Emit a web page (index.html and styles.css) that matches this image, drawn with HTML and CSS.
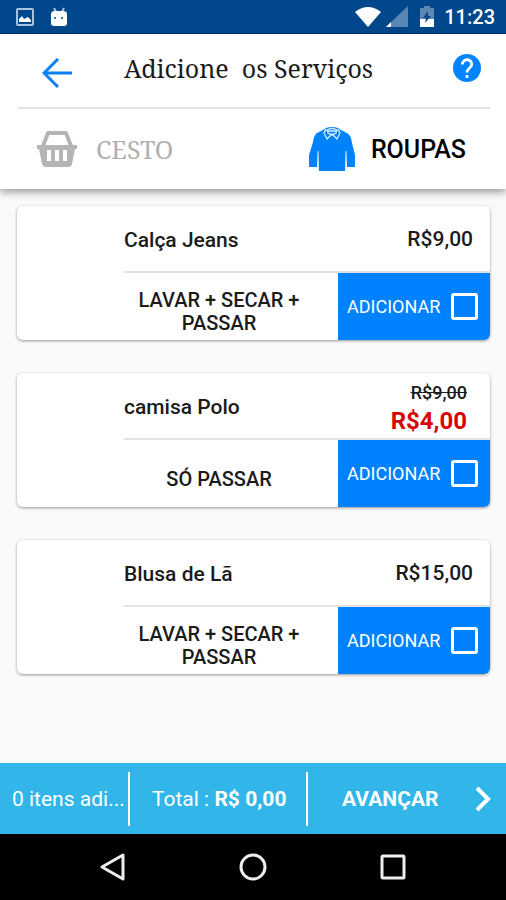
FILE: index.html
```html
<!DOCTYPE html>
<html lang="pt-BR">
<head>
<meta charset="utf-8">
<meta name="viewport" content="width=device-width, initial-scale=1">
<title>Adicione os Serviços</title>
<link rel="stylesheet" href="styles.css">
</head>
<body>
<div class="status">
  <svg class="status-picture" viewBox="0 0 18 18" width="18" height="18" aria-hidden="true"><rect x="1" y="1" width="16" height="16" rx="1" fill="none" stroke="#a9c2de" stroke-width="2"/><path d="M3 14V11L6 8L8 11L12 9L15 12V14Z" fill="#fff"/></svg>
  <svg class="status-robot" viewBox="0 0 18 20" width="18" height="20" aria-hidden="true"><path d="M4 1L6 5M14 1L12 5" stroke="#a9c2de" stroke-width="2"/><path d="M1 7Q1 4 5 4H13Q17 4 17 7V16Q17 19 14 19H4Q1 19 1 16Z" fill="#fff"/><circle cx="5" cy="11" r="1" fill="#00478b"/><circle cx="12" cy="11" r="1" fill="#00478b"/></svg>
  <svg class="status-wifi" viewBox="0 0 26 20" width="26" height="20" aria-hidden="true"><path d="M0 5Q13 -5 26 5L13 20Z" fill="#fff"/></svg>
  <svg class="status-signal" viewBox="0 0 22 21" width="22" height="21" aria-hidden="true"><path d="M0 21L22 0V21Z" fill="#5c87b4"/><path d="M0 21L5 16V21Z" fill="#fff"/></svg>
  <svg class="status-battery" viewBox="0 0 14 21" width="14" height="21" aria-hidden="true"><path d="M4 0H10V2H14V13H0V2H4Z" fill="#5c87b4"/><path d="M0 13H14V21H0Z" fill="#fff"/><path d="M8 5L3 12H6L5 17L11 10H8Z" fill="#00478b"/></svg>
  <time class="clock">11:23</time>
</div>
<header class="header">
  <div class="titlebar">
    <button class="icon-button back" aria-label="Voltar"><svg viewBox="0 0 30 30" width="30" height="30"><path d="M30 15H3M16 1L2 15L16 29" fill="none" stroke="#0b80f4" stroke-width="3"/></svg></button>
    <h1 class="title">Adicione&nbsp; os Serviços</h1>
    <button class="icon-button help" aria-label="Ajuda"><svg viewBox="0 0 28 28" width="28" height="28"><circle cx="14" cy="14" r="14" fill="#0084ff"/><path d="M9.300 10.500C9.300 4.200 18.700 4.200 18.700 10.300C18.700 14 14 14 14 18.500" fill="none" stroke="#fff" stroke-width="2.800"/><path d="M12.600 21H15.400V24H12.600Z" fill="#fff"/></svg></button>
  </div>
  <nav class="tabs">
    <a class="tab tab-basket" href="#cesto">
      <svg viewBox="0 0 42 36" width="42" height="36" aria-hidden="true"><path d="M7 15L12 2H30L35 15" fill="none" stroke="#b5b5b5" stroke-width="4" stroke-linejoin="round"/><path fill-rule="evenodd" d="M1 14H41V18H39L36 33Q35 36 33 36H9Q7 36 6 33L3 18H1ZM11 19V30H15V19ZM19 19V30H23V19ZM27 19V30H31V19Z" fill="#b5b5b5"/></svg>
      <span>CESTO</span>
    </a>
    <a class="tab tab-clothes" href="#roupas" aria-current="page">
      <svg viewBox="0 0 46 46" width="46" height="46" aria-hidden="true"><path d="M14 4L17 2Q23 0 29 2L32 4L38 7Q42 9 43 17L46 29V41H38L37 25L36 45H10L9 25L8 41H0V29L4 16Q5 9 8 7Z" fill="#0082fc"/><path d="M9 40V25M37 40V25" stroke="#d5edff" stroke-width="1"/><path d="M17 3L15 7L18 13L23 8L28 13L31 7L29 3M18 4Q23 1 28 4L27 7L23 9L19 7ZM19 5H27" fill="none" stroke="#d5edff" stroke-width="1.300"/></svg>
      <span>ROUPAS</span>
    </a>
  </nav>
</header>
<main class="list">
  <article class="card">
    <div class="summary"><h2 class="name">Calça Jeans</h2><p class="price">R$9,00</p></div>
    <div class="service"><p class="kind">LAVAR + SECAR + PASSAR</p><label class="add" for="jeans">ADICIONAR<input class="box" type="checkbox" id="jeans"></label></div>
  </article>
  <article class="card">
    <div class="summary"><h2 class="name">camisa Polo</h2><p class="price offer"><s class="old">R$9,00</s><strong class="new">R$4,00</strong></p></div>
    <div class="service"><p class="kind">SÓ PASSAR</p><label class="add" for="polo">ADICIONAR<input class="box" type="checkbox" id="polo"></label></div>
  </article>
  <article class="card">
    <div class="summary"><h2 class="name">Blusa de Lã</h2><p class="price">R$15,00</p></div>
    <div class="service"><p class="kind">LAVAR + SECAR + PASSAR</p><label class="add" for="blusa">ADICIONAR<input class="box" type="checkbox" id="blusa"></label></div>
  </article>
</main>
<footer class="checkout">
  <p class="count">0 itens adi...</p>
  <p class="total">Total : <strong>R$ 0,00</strong></p>
  <button class="next"><span>AVANÇAR</span><svg viewBox="0 0 16 26" width="16" height="26" aria-hidden="true"><path d="M2 2L13 13L2 24" fill="none" stroke="#fff" stroke-width="4"/></svg></button>
</footer>
<nav class="system">
  <button class="icon-button" aria-label="Retornar"><svg viewBox="0 0 28 28" width="28" height="28"><path d="M24 2V26L3 14Z" fill="none" stroke="#eee" stroke-width="3" stroke-linejoin="round"/></svg></button>
  <button class="icon-button" aria-label="Início"><svg viewBox="0 0 28 28" width="28" height="28"><circle cx="14" cy="14" r="12" fill="none" stroke="#eee" stroke-width="3"/></svg></button>
  <button class="icon-button" aria-label="Recentes"><svg viewBox="0 0 28 28" width="28" height="28"><rect x="3" y="3" width="22" height="22" rx="1" fill="none" stroke="#eee" stroke-width="3"/></svg></button>
</nav>
</body>
</html>
```
FILE: styles.css
```css
* { box-sizing: border-box; }
body {
  margin: 0;
  min-height: 100vh;
  display: flex;
  flex-direction: column;
  background: #fafafa;
  color: #1b1b1b;
  font-family: Roboto, "Liberation Sans", sans-serif;
}
h1, h2, p { margin: 0; }
button { border: 0; padding: 0; background: none; color: inherit; font: inherit; }
svg { display: block; flex: none; }
.icon-button { display: flex; flex: none; }

.status {
  display: flex;
  align-items: center;
  height: 34px;
  padding: 0 11px 0 16px;
  background: #00478b;
  border-bottom: 1px solid #002f82;
  color: #fff;
}
.status-robot { margin-left: 16px; }
.status-wifi { margin-left: auto; }
.status-signal { margin-left: 5px; }
.status-battery { margin: 0 10px 0 12px; }
.clock { font-size: 20px; font-weight: 500; }

.header { background: #fff; box-shadow: 0 3px 8px #00000066; padding: 0 16px 0 18px; }
.titlebar {
  display: flex;
  align-items: center;
  height: 75px;
  padding: 0 9px 0 24px;
  border-bottom: 2px solid #e2e2e2;
}
.title {
  flex: 1;
  margin-left: 52px;
  padding-bottom: 6px;
  font-family: "Noto Serif", "Liberation Serif", serif;
  font-size: 25px;
  font-weight: 400;
  line-height: 30px;
  white-space: nowrap;
}
.back { padding-top: 4px; }
.help { padding-bottom: 6px; }
.tabs { display: flex; justify-content: space-between; height: 80px; padding: 0 24px 0 18px; }
.tab { display: flex; align-items: center; color: inherit; text-decoration: none; }
.tab-basket {
  gap: 18px;
  color: #b0b0b0;
  font-family: "Noto Serif", "Liberation Serif", serif;
  font-size: 25px;
}
.tab-clothes { gap: 16px; color: #000; font-size: 25px; font-weight: 500; }

.list { flex: 1; display: flex; flex-direction: column; gap: 33px; padding: 17px 16px 33px 17px; }
.card {
  padding-left: 107px;
  border-radius: 6px;
  overflow: hidden;
  background: #fff;
  box-shadow: 0 1px 3px #00000066;
}
.summary {
  display: flex;
  align-items: center;
  justify-content: space-between;
  height: 67px;
  padding-right: 17px;
  border-bottom: 2px solid #e2e2e2;
}
.name, .price { font-size: 21px; font-weight: 500; line-height: 24px; }
.name { padding-top: 2px; }
.offer { display: flex; flex-direction: column; align-items: flex-end; padding: 6px 6px 0 0; }
.old { font-size: 18px; }
.new { font-size: 24px; font-weight: 700; line-height: 32px; color: #da0308; }
.service { display: flex; height: 67px; }
.kind {
  flex: 1;
  align-self: center;
  padding: 11px 24px 0 0;
  font-size: 20px;
  font-weight: 500;
  line-height: 23px;
  text-align: center;
}
.add {
  display: flex;
  align-items: center;
  justify-content: space-between;
  flex: none;
  width: 152px;
  padding: 0 12px 0 9px;
  background: #0082ff;
  color: #fff;
  font-size: 18px;
}
.box {
  appearance: none;
  width: 27px;
  height: 27px;
  margin: 0;
  border: 3px solid #fff;
  border-radius: 3px;
}

.checkout {
  display: flex;
  align-items: center;
  height: 71px;
  background: #32b5e8;
  color: #fff;
}
.count {
  width: 130px;
  padding-left: 12px;
  border-right: 2px solid #fff;
  white-space: nowrap;
  font-size: 21px;
  line-height: 54px;
}
.total {
  flex: 1;
  padding-left: 22px;
  border-right: 2px solid #fff;
  font-size: 21px;
  line-height: 54px;
  white-space: nowrap;
}
.next {
  display: flex;
  align-items: center;
  justify-content: space-between;
  width: 198px;
  padding: 0 15px 0 34px;
  font-size: 21px;
  font-weight: 700;
}
.system {
  display: flex;
  align-items: center;
  justify-content: center;
  gap: 112px;
  height: 66px;
  background: #000;
}
```
